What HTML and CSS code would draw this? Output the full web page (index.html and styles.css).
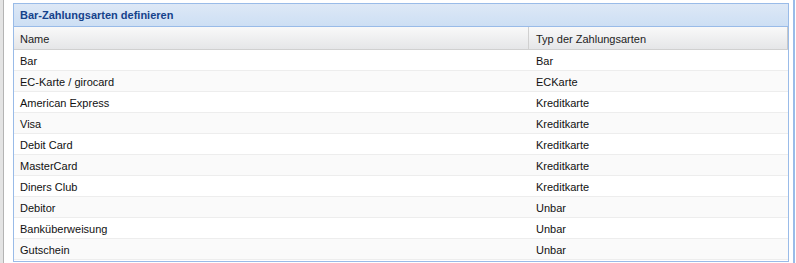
FILE: index.html
```html
<!DOCTYPE html>
<html lang="de">
<head>
<meta charset="utf-8">
<title>Bar-Zahlungsarten definieren</title>
<link rel="stylesheet" href="styles.css">
</head>
<body>
<div class="page">
  <div class="left-strip"></div>
  <div class="panel">
    <div class="panel-header">Bar-Zahlungsarten definieren</div>
    <div class="grid">
      <div class="grid-head">
        <div class="col c1">Name</div>
        <div class="col c2">Typ der Zahlungsarten</div>
        <div class="col c3"></div>
      </div>
      <div class="row"><div class="cell c1">Bar</div><div class="cell c2">Bar</div></div>
      <div class="row alt"><div class="cell c1">EC-Karte / girocard</div><div class="cell c2">ECKarte</div></div>
      <div class="row"><div class="cell c1">American Express</div><div class="cell c2">Kreditkarte</div></div>
      <div class="row alt"><div class="cell c1">Visa</div><div class="cell c2">Kreditkarte</div></div>
      <div class="row"><div class="cell c1">Debit Card</div><div class="cell c2">Kreditkarte</div></div>
      <div class="row alt"><div class="cell c1">MasterCard</div><div class="cell c2">Kreditkarte</div></div>
      <div class="row"><div class="cell c1">Diners Club</div><div class="cell c2">Kreditkarte</div></div>
      <div class="row alt"><div class="cell c1">Debitor</div><div class="cell c2">Unbar</div></div>
      <div class="row"><div class="cell c1">Banküberweisung</div><div class="cell c2">Unbar</div></div>
      <div class="row alt"><div class="cell c1">Gutschein</div><div class="cell c2">Unbar</div></div>
    </div>
  </div>
  <div class="right-gap"></div>
  <div class="right-bar"></div>
</div>
</body>
</html>
```

FILE: styles.css
```css
html, body {
  margin: 0;
  padding: 0;
  background: #ffffff;
}
body {
  font-family: "Liberation Sans", Arial, sans-serif;
  font-size: 11px;
  color: #111;
}
.page {
  display: flex;
  height: 263px;
  width: 796px;
  overflow: hidden;
}
.left-strip {
  width: 3px;
  background: #e4e4e4;
  border-right: 1px solid #b4b4b4;
  margin-right: 9px;
  flex: none;
}
.panel {
  width: 774px;
  flex: none;
  margin-top: 3px;
  height: 257px;
  border: 1px solid #99bbe8;
  background: #fff;
  display: flex;
  flex-direction: column;
  overflow: hidden;
}
.panel-header {
  height: 22px;
  line-height: 22px;
  padding-top: 1px;
  box-sizing: border-box;
  padding-left: 6px;
  border-bottom: 1px solid #99bbe8;
  background: linear-gradient(#dde8f6, #cddff4);
  color: #15428b;
  font-weight: bold;
  font-size: 11px;
  height: 23px;
  line-height: 21px;
}
.grid {
  display: flex;
  flex-direction: column;
}
.grid-head {
  display: flex;
  height: 22px;
  border-bottom: 1px solid #d0d0d0;
  background: linear-gradient(#f9f9f9, #e5e6e8);
  color: #222;
}
.col {
  line-height: 22px;
  padding-top: 1px;
  padding-left: 6px;
  box-sizing: border-box;
}
.grid-head .c1 {
  width: 515px;
  border-right: 1px solid #d0d0d0;
}
.grid-head .c2 {
  width: 258px;
  padding-left: 7px;
}
.grid-head .c3 {
  width: 1px;
  padding: 0;
  background: #c8c8c8;
}
.row {
  display: flex;
  height: 20px;
  border-bottom: 1px solid #ededed;
  background: #fff;
  overflow: hidden;
}
.row.alt {
  background: #fafafa;
}
.cell {
  line-height: 20px;
  padding-top: 1px;
  padding-left: 6px;
  box-sizing: border-box;
  color: #111;
}
.cell.c1 {
  width: 515px;
}
.cell.c2 {
  padding-left: 7px;
}
.right-gap {
  width: 4px;
  flex: none;
}
.right-bar {
  width: 2px;
  background: #99bbe8;
  flex: none;
}
```
